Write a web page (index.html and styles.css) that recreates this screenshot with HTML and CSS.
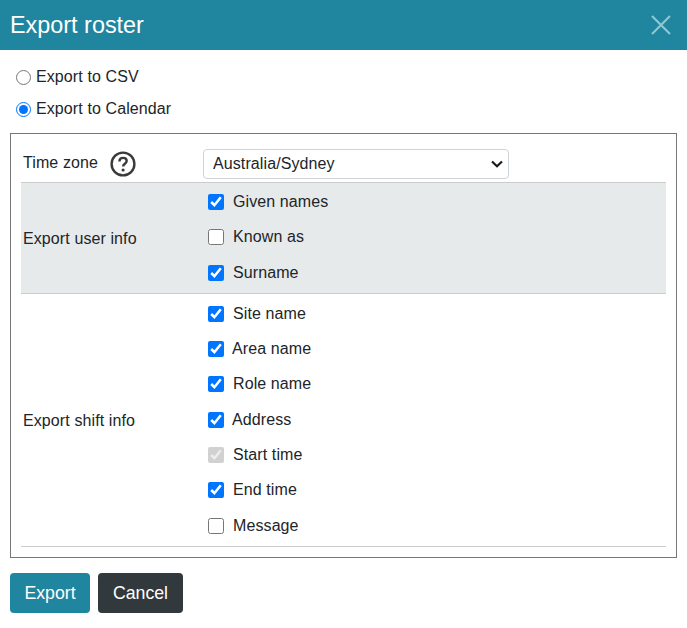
FILE: index.html
```html
<html>
  <head>
    <meta http-equiv="content-type" content="text/html; charset=utf-8" />
    <link rel="stylesheet" href="styles.css">
  </head>
  <body>
    <div class="modal">
      <div class="modal-head">
        <h1>Export roster</h1>
        <svg class="close-icon" width="20" height="20" viewBox="0 0 20 20">
          <path d="M1 1L19 19M19 1L1 19" stroke="#8fc6d3" stroke-width="2.2" fill="none"/>
        </svg>
      </div>
      <form class="export-form">
        <label class="radio-line"><input type="radio" name="kind"> Export to CSV</label>
        <label class="radio-line"><input type="radio" name="kind" checked> Export to Calendar</label>
        <div class="options-box">
          <div class="row row-zone">
            <div class="row-label">
              Time zone
              <svg class="help-icon" width="26" height="26" viewBox="0 0 26 26">
                <circle cx="13" cy="13" r="11.4" stroke="#3a3a3a" stroke-width="2.4" fill="none"/>
                <path d="M9.4 10.4c0-2.2 1.6-3.5 3.7-3.5s3.6 1.3 3.6 3.2c0 2.6-3.6 2.8-3.6 5.4" stroke="#3a3a3a" stroke-width="2.4" fill="none"/>
                <circle cx="13.1" cy="19" r="1.6" fill="#3a3a3a"/>
              </svg>
            </div>
            <div class="select-wrap">
              <select class="zone-select">
                <option>Australia/Sydney</option>
              </select>
              <svg class="select-arrow" width="12" height="8" viewBox="0 0 12 8">
                <path d="M1 1.5L6 6.2L11 1.5" stroke="#1a1a1a" stroke-width="2.2" fill="none"/>
              </svg>
            </div>
          </div>
          <div class="row row-grey">
            <div class="row-label">Export user info</div>
            <div class="checks">
              <label class="check"><input type="checkbox" checked> Given names</label>
              <label class="check"><input type="checkbox"> Known as</label>
              <label class="check"><input type="checkbox" checked> Surname</label>
            </div>
          </div>
          <div class="row">
            <div class="row-label">Export shift info</div>
            <div class="checks">
              <label class="check"><input type="checkbox" checked> Site name</label>
              <label class="check check-tight"><input type="checkbox" checked> Area name</label>
              <label class="check"><input type="checkbox" checked> Role name</label>
              <label class="check check-tight"><input type="checkbox" checked> Address</label>
              <label class="check"><input type="checkbox" checked disabled> Start time</label>
              <label class="check"><input type="checkbox" checked> End time</label>
              <label class="check"><input type="checkbox"> Message</label>
            </div>
          </div>
        </div>
        <div class="buttons">
          <button type="button" class="btn btn-export">Export</button>
          <button type="button" class="btn btn-cancel">Cancel</button>
        </div>
      </form>
    </div>
  </body>
</html>
```
FILE: styles.css
```css
body {
  margin: 0;
  padding: 0;
  background: #fff;
  color: #212529;
  font-family: "Liberation Sans", Arial, sans-serif;
  font-size: 16px;
  letter-spacing: 0.1px;
}
.modal-head {
  background: #20859e;
  height: 50px;
  padding: 0 17px 0 10px;
  display: flex;
  align-items: center;
  justify-content: space-between;
}
.close-icon {
  margin-right: -1px;
}
h1 {
  margin: 0;
  color: #fff;
  font-size: 23.4px;
  font-weight: normal;
  letter-spacing: 0;
}
.export-form {
  padding: 11px 10px 0;
}
.radio-line {
  display: flex;
  align-items: center;
  height: 32px;
  padding-left: 6px;
  gap: 5px;
}
.radio-line input {
  margin: 0;
  width: 15px;
  height: 15px;
}
.options-box {
  border: 1px solid #777;
  margin-top: 8px;
  padding: 0 10px 11px;
  height: 425px;
  box-sizing: border-box;
}
.row {
  display: grid;
  grid-template-columns: 182px 1fr;
  align-items: center;
  border-bottom: 1px solid #ccc;
}
.row-zone {
  height: 49px;
  padding-top: 8px;
  box-sizing: border-box;
}
.row-grey {
  background: #e7eaeb;
}
.row-label {
  padding: 2px 0 0 2px;
  display: flex;
  align-items: center;
  gap: 12px;
}
.help-icon {
  margin-top: 1px;
}
.select-wrap {
  position: relative;
  width: 306px;
  height: 30px;
  margin-top: 4px;
}
.zone-select {
  appearance: none;
  -webkit-appearance: none;
  width: 100%;
  height: 100%;
  font-family: inherit;
  font-size: 16px;
  letter-spacing: 0.1px;
  color: #212529;
  background: #fff;
  border: 1px solid #ced4da;
  border-radius: 4px;
  padding: 0 9px 2px;
}
.select-arrow {
  position: absolute;
  right: 6px;
  top: 11px;
  pointer-events: none;
}
.checks {
  padding: 1.5px 0 3px;
}
.check {
  display: flex;
  align-items: center;
  height: 35.33px;
  padding-left: 5px;
  gap: 9px;
}
.check-tight {
  gap: 8px;
}
.check input {
  margin: 0;
  width: 16px;
  height: 16px;
}
.buttons {
  display: flex;
  gap: 8px;
  margin-top: 15px;
}
.btn {
  height: 40px;
  padding: 0;
  border: 0;
  border-radius: 4px;
  color: #fff;
  font-family: inherit;
  font-size: 17.7px;
  letter-spacing: 0;
}
.btn-export {
  width: 80px;
  background: #20859e;
}
.btn-cancel {
  width: 85px;
  background: #32393c;
}
```
